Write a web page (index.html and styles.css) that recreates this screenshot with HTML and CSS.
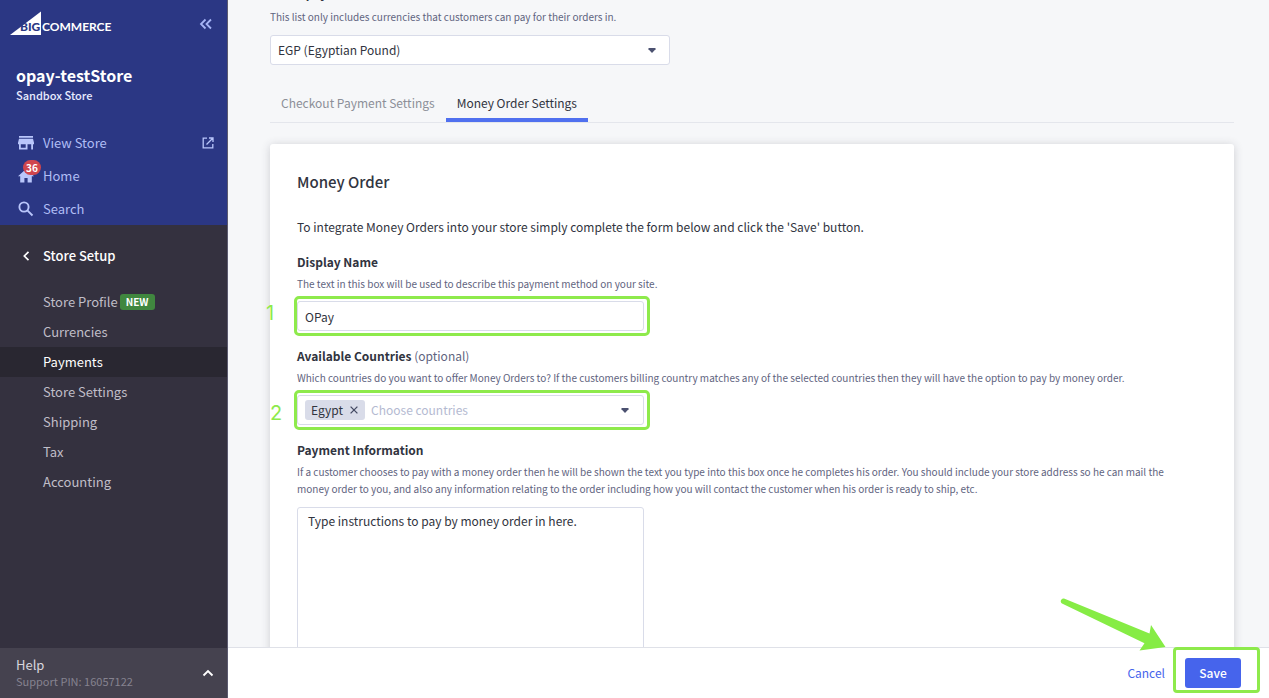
FILE: index.html
```html
<!DOCTYPE html>
<html lang="en">
<head>
<meta charset="utf-8">
<title>Money Order Settings</title>
<link rel="stylesheet" href="styles.css">
</head>
<body>
<div class="app">
  <aside class="sidebar">
    <div class="sidebar-top">
      <div class="brand-row">
        <svg class="logo" width="108" height="26" viewBox="0 0 108 26" role="img" aria-label="BigCommerce">
          <path d="M0 24L31 .5V24Z" fill="#fff"/>
          <text class="logo-big" x="10" y="20">BIG</text>
          <text class="logo-rest" x="32" y="20">COMMERCE</text>
        </svg>
        <button class="icon-button" aria-label="Collapse menu">
          <svg width="14" height="12" viewBox="0 0 14 12" fill="none" stroke="#a5b4f5" stroke-width="1.800"><path d="M6.500 1.500L2 6l4.500 4.500M12 1.500L7.500 6l4.500 4.500"/></svg>
        </button>
      </div>
      <h1 class="store-name">opay-testStore</h1>
      <p class="store-type">Sandbox Store</p>
      <nav class="main-nav">
        <a class="main-link" href="#">
          <svg width="16" height="14" viewBox="0 0 16 14" fill="#b9c6fb"><path d="M1 0h14v1.800H1zM1 2.700h14l1 4v1.600h-1V13.500h-1.800V8.300H9.500v5.200H1V8.300H0V6.700zM2.800 8.300v3.500h4.900V8.300z" fill-rule="evenodd"/></svg>
          <span>View Store</span>
          <svg class="external" width="12" height="12" viewBox="0 0 12 12" fill="none" stroke="#b9c6fb" stroke-width="1.300"><path d="M5 1.200H1.200v9.600h9.600V7M7 1h4v4M11 1L4.500 7.500"/></svg>
        </a>
        <a class="main-link" href="#">
          <span class="home-icon">
            <svg width="16" height="14" viewBox="0 0 16 14" fill="#b9c6fb"><path d="M8 0l8 7.200h-2.200V13.500H9.600V9H6.400v4.500H2.200V7.200H0z"/></svg>
            <span class="count">36</span>
          </span>
          <span>Home</span>
        </a>
        <a class="main-link" href="#">
          <svg width="16" height="16" viewBox="0 0 16 16" fill="none" stroke="#b9c6fb" stroke-width="1.900"><circle cx="6" cy="6" r="4.600"/><path d="M9.300 9.300L14.500 14.500"/></svg>
          <span>Search</span>
        </a>
      </nav>
    </div>
    <nav class="sub-nav">
      <a class="sub-title" href="#">
        <svg width="16" height="10" viewBox="0 0 16 10" fill="none" stroke="#fff" stroke-width="1.700"><path d="M10.500 .8L6.300 5l4.200 4.200"/></svg>
        <span>Store Setup</span>
      </a>
      <a class="sub-link" href="#">Store Profile <span class="new">NEW</span></a>
      <a class="sub-link" href="#">Currencies</a>
      <a class="sub-link active" href="#">Payments</a>
      <a class="sub-link" href="#">Store Settings</a>
      <a class="sub-link" href="#">Shipping</a>
      <a class="sub-link" href="#">Tax</a>
      <a class="sub-link" href="#">Accounting</a>
    </nav>
    <button class="help">
      <span><span class="help-title">Help</span><span class="help-pin">Support PIN: 16057122</span></span>
      <svg width="12" height="8" viewBox="0 0 12 8" fill="none" stroke="#fff" stroke-width="1.900"><path d="M1.500 6.500L6 2l4.500 4.500"/></svg>
    </button>
  </aside>

  <div class="page">
    <main class="content">
      <label class="currency-label" for="currency">Show payment methods for</label>
      <p class="hint">This list only includes currencies that customers can pay for their orders in.</p>
      <div class="select-wrap">
        <select id="currency" class="field"><option>EGP (Egyptian Pound)</option></select>
        <svg class="caret" width="8" height="5" viewBox="0 0 8 5"><path d="M.5 0h7v1.200L4 5 .5 1.200z" fill="#4b5170"/></svg>
      </div>
      <div class="tabs" role="tablist">
        <button class="tab" role="tab">Checkout Payment Settings</button>
        <button class="tab selected" role="tab" aria-selected="true">Money Order Settings</button>
      </div>
      <form class="card" id="settings">
        <h2 class="card-title">Money Order</h2>
        <p class="intro">To integrate Money Orders into your store simply complete the form below and click the 'Save' button.</p>

        <div class="group">
          <label class="label" for="display-name">Display Name</label>
          <p class="hint">The text in this box will be used to describe this payment method on your site.</p>
          <div class="marked">
            <span class="step step-one">1</span>
            <input id="display-name" class="field" type="text" value="OPay">
          </div>
        </div>

        <div class="group">
          <label class="label" for="countries">Available Countries <span class="optional">(optional)</span></label>
          <p class="hint">Which countries do you want to offer Money Orders to? If the customers billing country matches any of the selected countries then they will have the option to pay by money order.</p>
          <div class="marked">
            <span class="step step-two">2</span>
            <div class="field chips">
              <span class="chip">Egypt
                <button type="button" class="icon-button" aria-label="Remove Egypt"><svg width="8" height="8" viewBox="0 0 8 8" stroke="#444a63" stroke-width="1.300"><path d="M.6 .6l6.800 6.800M7.400 .6L.6 7.400"/></svg></button>
              </span>
              <input id="countries" class="chip-input" type="text" placeholder="Choose countries">
              <svg class="caret" width="8" height="5" viewBox="0 0 8 5"><path d="M.5 0h7v1.200L4 5 .5 1.200z" fill="#4b5170"/></svg>
            </div>
          </div>
        </div>

        <div class="group">
          <label class="label" for="info">Payment Information</label>
          <p class="hint">If a customer chooses to pay with a money order then he will be shown the text you type into this box once he completes his order. You should include your store address so he can mail the money order to you, and also any information relating to the order including how you will contact the customer when his order is ready to ship, etc.</p>
          <textarea id="info" class="info">Type instructions to pay by money order in here.</textarea>
        </div>
      </form>
    </main>
    <footer class="actions">
      <svg class="arrow" width="106" height="54" viewBox="0 0 106 54" fill="#86ec45"><path d="M4 .5C1 0-.5 4 2 5.500L84.500 45.300 79.500 52.500 105.500 49 91 27 89.500 35.500Z"/></svg>
      <button class="cancel">Cancel</button>
      <span class="save-mark"><button class="save" form="settings">Save</button></span>
    </footer>
  </div>
</div>
</body>
</html>
```

FILE: styles.css
```css
* { box-sizing: border-box; }
body {
  margin: 0;
  font-family: "Noto Sans CJK SC", "Noto Sans", sans-serif;
  font-size: 12px;
  line-height: 18px;
  color: #313440;
}
h1, h2, p { margin: 0; }
button, input, select, textarea { font: inherit; color: inherit; }
button { border: 0; padding: 0; background: none; cursor: pointer; }
a { color: inherit; text-decoration: none; }
svg { flex: none; display: block; }

.app { display: flex; height: 100vh; overflow: hidden; }

.sidebar {
  flex: none;
  width: 228px;
  display: flex;
  flex-direction: column;
  background: #34313f;
  border-right: 1px solid #5c5b70;
}
.sidebar-top { background: #2b3784; padding: 11px 0 0; }
.brand-row { display: flex; justify-content: space-between; align-items: center; padding: 0 14px 0 10px; }
.logo-big, .logo-rest { font-family: Lato, sans-serif; font-size: 12px; font-weight: 700; }
.logo-big { font-weight: 900; fill: #2b3784; }
.logo-rest { fill: #fff; }
.store-name { margin-top: 28px; padding-left: 16px; font-size: 16px; line-height: 20px; font-weight: 700; color: #fff; }
.store-type { margin-top: 1px; padding-left: 16px; font-size: 11px; line-height: 18px; font-weight: 500; color: #e8ebff; }
.main-nav { margin-top: 22px; color: #b0bdf5; }
.main-link { display: flex; align-items: center; gap: 9px; height: 33px; padding: 0 13px 0 18px; font-size: 13px; }
.external { margin-left: auto; }
.home-icon { position: relative; }
.count {
  position: absolute;
  left: 5px;
  top: -9px;
  padding: 0 3px;
  border-radius: 8px;
  background: #d0464d;
  color: #fff;
  font-size: 10px;
  line-height: 15px;
  font-weight: 700;
}
.sub-nav { flex: 1; padding-top: 16px; color: #c0bec8; }
.sub-title { display: flex; align-items: center; gap: 9px; height: 30px; margin-bottom: 16px; padding-left: 18px; color: #fff; font-size: 13px; font-weight: 500; }
.sub-link { display: flex; align-items: center; gap: 2px; height: 30px; padding-left: 43px; font-size: 13px; }
.sub-link.active { background: #292731; color: #fff; }
.new { padding: 0 6px; border-radius: 3px; background: #40873f; color: #fff; font-size: 10px; line-height: 16px; font-weight: 700; }
.help {
  display: flex;
  align-items: center;
  justify-content: space-between;
  height: 50px;
  padding: 0 13px 0 16px;
  background: #45424f;
  text-align: left;
}
.help-title, .help-pin { display: block; line-height: 16px; }
.help-title { font-size: 13px; color: #d8d6de; }
.help-pin { font-size: 11px; color: #85828f; }

.page { flex: 1; min-width: 0; display: flex; flex-direction: column; background: #f6f7f9; }
.content { flex: 1; min-height: 0; overflow: hidden; padding: 0 35px 0 42px; }
.currency-label { display: block; margin-top: -17px; margin-bottom: 5px; line-height: 20px; font-weight: 700; }
.hint { max-width: 880px; font-size: 10px; line-height: 17px; color: #5f6480; }
.field {
  display: block;
  width: 100%;
  height: 30px;
  padding: 0 7px;
  border: 1px solid #d9dce9;
  border-radius: 3px;
  background: #fff;
  font-size: 12px;
  outline: 0;
}
.select-wrap { position: relative; width: 400px; margin-top: 10px; }
.select-wrap .field { appearance: none; }
.select-wrap .caret { position: absolute; right: 14px; top: 13px; }
.tabs { display: flex; margin-top: 19px; border-bottom: 1px solid #e4e6ec; }
.tab { height: 38px; padding: 3px 11px 0; border-bottom: 4px solid transparent; color: #8c8f98; }
.tab.selected { border-bottom-color: #5070ef; color: #313440; }
.card {
  margin-top: 21px;
  padding: 27px 27px 0;
  min-height: 600px;
  border-radius: 3px;
  background: #fff;
  box-shadow: 0 1px 10px rgba(49, 52, 64, .2);
}
.card-title { font-size: 15px; line-height: 22px; font-weight: 500; }
.intro { margin-top: 25px; margin-bottom: 17px; }
.group { margin-bottom: 11px; }
.label { display: block; font-weight: 700; line-height: 18px; margin-bottom: 4px; }
.optional { font-weight: 400; color: #5f6480; }
.marked {
  position: relative;
  width: 356px;
  margin: 4px 0 0 -3px;
  padding: 2px 3px 2px 0;
  border: 3px solid #8eea4c;
  border-radius: 5px;
}
.step { position: absolute; font-family: Inter, sans-serif; font-size: 20px; line-height: 24px; color: #8eea4c; }
.step-one { left: -31px; top: 2px; }
.step-two { left: -27px; top: 8px; }
.chips { display: flex; align-items: center; padding-right: 14px; }
.chip { display: flex; align-items: center; gap: 7px; height: 20px; padding: 0 7px 0 6px; border-radius: 3px; background: #d9dce9; }
.chip-input { flex: 1; min-width: 0; margin-left: 6px; padding: 0; border: 0; outline: 0; background: none; }
.chip-input::placeholder { color: #b4bad1; opacity: 1; }
.info {
  display: block;
  width: 347px;
  height: 170px;
  margin-top: 10px;
  padding: 4px 10px;
  border: 1px solid #d9dce9;
  border-radius: 3px;
  resize: none;
  outline: 0;
}
.actions {
  position: relative;
  display: flex;
  justify-content: flex-end;
  align-items: baseline;
  gap: 8px;
  height: 51px;
  padding-right: 9px;
  border-top: 1px solid #dfe1e8;
  background: #fff;
}
.cancel { color: #4664ec; }
.save-mark { margin-top: -1px; padding: 8px 16px 2px 9px; border: 3px solid #8eea4c; border-radius: 4px; }
.save { display: block; min-width: 56px; height: 30px; border-radius: 3px; background: #4664ec; color: #fff; font-weight: 500; }
.arrow { position: absolute; right: 103px; top: -50px; }
```
